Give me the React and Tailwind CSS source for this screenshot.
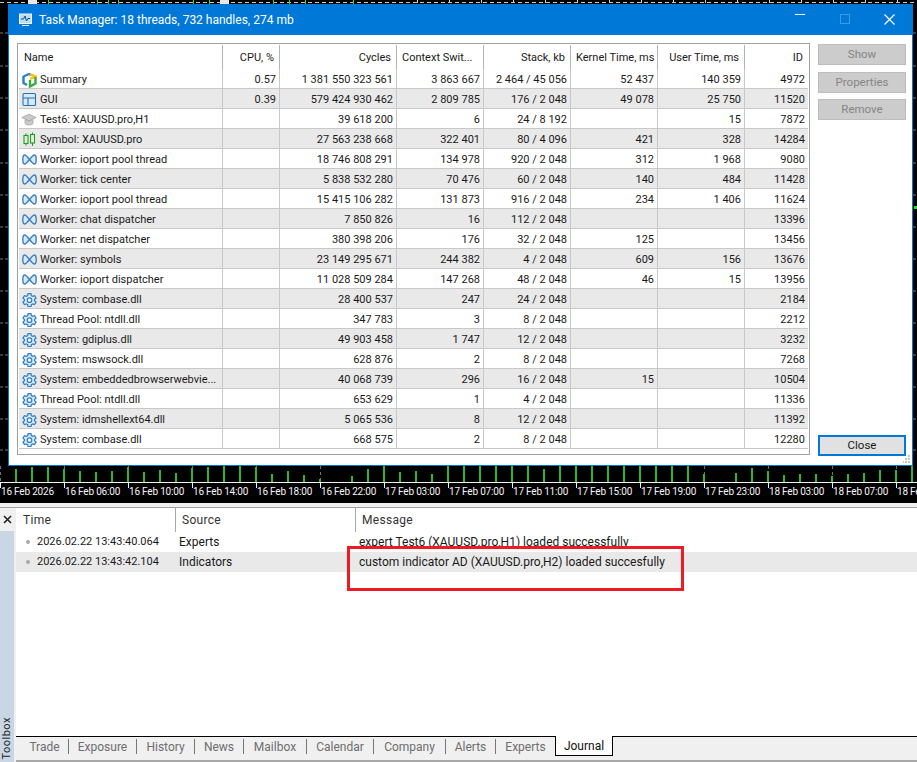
import React from 'react';

const font = { fontFamily: 'Roboto, "Liberation Sans", sans-serif' };

const columns = [
  { label: 'Name', width: 'w-[204px]', align: 'text-left' },
  { label: 'CPU, %', width: 'w-[57px]', align: 'text-right' },
  { label: 'Cycles', width: 'w-[117px]', align: 'text-right' },
  { label: 'Context Swit...', width: 'w-[87px]', align: 'text-left' },
  { label: 'Stack, kb', width: 'w-[87px]', align: 'text-right' },
  { label: 'Kernel Time, ms', width: 'w-[87px]', align: 'text-left' },
  { label: 'User Time, ms', width: 'w-[87px]', align: 'text-right' },
  { label: 'ID', width: 'w-[63px]', align: 'text-right' },
];

const rows = [
  ['summary', 'Summary', '0.57', '1 381 550 323 561', '3 863 667', '2 464 / 45 056', '52 437', '140 359', '4972'],
  ['gui', 'GUI', '0.39', '579 424 930 462', '2 809 785', '176 / 2 048', '49 078', '25 750', '11520'],
  ['cap', 'Test6: XAUUSD.pro,H1', '', '39 618 200', '6', '24 / 8 192', '', '15', '7872'],
  ['candle', 'Symbol: XAUUSD.pro', '', '27 563 238 668', '322 401', '80 / 4 096', '421', '328', '14284'],
  ['worker', 'Worker: ioport pool thread', '', '18 746 808 291', '134 978', '920 / 2 048', '312', '1 968', '9080'],
  ['worker', 'Worker: tick center', '', '5 838 532 280', '70 476', '60 / 2 048', '140', '484', '11428'],
  ['worker', 'Worker: ioport pool thread', '', '15 415 106 282', '131 873', '916 / 2 048', '234', '1 406', '11624'],
  ['worker', 'Worker: chat dispatcher', '', '7 850 826', '16', '112 / 2 048', '', '', '13396'],
  ['worker', 'Worker: net dispatcher', '', '380 398 206', '176', '32 / 2 048', '125', '', '13456'],
  ['worker', 'Worker: symbols', '', '23 149 295 671', '244 382', '4 / 2 048', '609', '156', '13676'],
  ['worker', 'Worker: ioport dispatcher', '', '11 028 509 284', '147 268', '48 / 2 048', '46', '15', '13956'],
  ['gear', 'System: combase.dll', '', '28 400 537', '247', '24 / 2 048', '', '', '2184'],
  ['gear', 'Thread Pool: ntdll.dll', '', '347 783', '3', '8 / 2 048', '', '', '2212'],
  ['gear', 'System: gdiplus.dll', '', '49 903 458', '1 747', '12 / 2 048', '', '', '3232'],
  ['gear', 'System: mswsock.dll', '', '628 876', '2', '8 / 2 048', '', '', '7268'],
  ['gear', 'System: embeddedbrowserwebvie...', '', '40 068 739', '296', '16 / 2 048', '15', '', '10504'],
  ['gear', 'Thread Pool: ntdll.dll', '', '653 629', '1', '4 / 2 048', '', '', '11336'],
  ['gear', 'System: idmshellext64.dll', '', '5 065 536', '8', '12 / 2 048', '', '', '11392'],
  ['gear', 'System: combase.dll', '', '668 575', '2', '8 / 2 048', '', '', '12280'],
];

const axisLabels = [
  '16 Feb 2026', '16 Feb 06:00', '16 Feb 10:00', '16 Feb 14:00', '16 Feb 18:00',
  '16 Feb 22:00', '17 Feb 03:00', '17 Feb 07:00', '17 Feb 11:00', '17 Feb 15:00',
  '17 Feb 19:00', '17 Feb 23:00', '18 Feb 03:00', '18 Feb 07:00', '18 Fe',
];

// x position and top y of the volume bars under the dialog
const bars = [
  [16, 469], [32, 467], [48, 467], [64, 469], [80, 471], [96, 472], [112, 471], [128, 467],
  [144, 472], [160, 470], [176, 473], [192, 468], [208, 467], [224, 466], [240, 466], [256, 467],
  [272, 474], [288, 471], [304, 475], [320, 479], [352, 476], [368, 469], [384, 466], [400, 472],
  [416, 471], [432, 474], [448, 466], [464, 466], [480, 466], [496, 466], [512, 466], [528, 466],
  [544, 469], [560, 466], [576, 466], [592, 466], [608, 466], [624, 466], [640, 466], [656, 466],
  [672, 466], [688, 466], [704, 474], [736, 473], [752, 468], [768, 471], [784, 475], [800, 474],
  [816, 474], [832, 476], [848, 474], [864, 473], [880, 470], [896, 470], [912, 466],
];

const tabs = [
  { label: 'Trade', width: 'w-[48px]' },
  { label: 'Exposure', width: 'w-[68px]' },
  { label: 'History', width: 'w-[58px]' },
  { label: 'News', width: 'w-[49px]' },
  { label: 'Mailbox', width: 'w-[63px]' },
  { label: 'Calendar', width: 'w-[67px]' },
  { label: 'Company', width: 'w-[72px]' },
  { label: 'Alerts', width: 'w-[50px]' },
];

function RowIcon({ type }) {
  if (type === 'summary') {
    return (
      <svg width="15" height="16" viewBox="0 0 15 16" fill="none" strokeWidth="2.4">
        <path d="M1.5 4.5 L7 2 L9 3" stroke="#2f7fd0" />
        <path d="M1.5 4 V11 L5 13" stroke="#2f7fd0" />
        <path d="M8 2.2 L13.5 4.5 L8 7" stroke="#f2c21a" />
        <path d="M13.5 5 V11.5 L8 14.5 V8" stroke="#3bab3b" />
      </svg>
    );
  }
  if (type === 'gui') {
    return (
      <svg width="15" height="15" viewBox="0 0 15 15" fill="#d7e8f7" stroke="#2272b8" strokeWidth="1.1">
        <rect x="1" y="1.5" width="12.5" height="12" rx="1" />
        <path d="M1 6 H13.5 M6 6 V13.5" fill="none" />
      </svg>
    );
  }
  if (type === 'cap') {
    return (
      <svg width="16" height="15" viewBox="0 0 16 15" fill="#c9c9c9" stroke="#a6a6a6" strokeWidth="0.8">
        <path d="M0.8 5.5 L8 2.2 L15.2 5.5 L8 8.8 Z" />
        <path d="M4 7.5 V11.5 C6 13.5 10 13.5 12 11.5 V7.5 L8 9.3 Z" />
      </svg>
    );
  }
  if (type === 'candle') {
    return (
      <svg width="15" height="15" viewBox="0 0 15 15" fill="none" stroke="#1ea01e" strokeWidth="1.1">
        <path d="M4 1.5 V3.5 M4 11.5 V13.5 M10.5 0.5 V2.5 M10.5 11 V14" />
        <rect x="2" y="3.5" width="4" height="8" />
        <rect x="8.5" y="2.5" width="4" height="8.5" />
      </svg>
    );
  }
  if (type === 'worker') {
    return (
      <svg width="15" height="15" viewBox="0 0 15 15" fill="#d9e9f7" stroke="#3a7fc4" strokeWidth="1.4">
        <path d="M7.5 7.5 C5 4.3 3.6 3 2.6 3 C1.2 3 0.8 5 0.8 7.5 C0.8 10 1.2 12 2.6 12 C3.6 12 5 10.7 7.5 7.5 C10 4.3 11.4 3 12.4 3 C13.8 3 14.2 5 14.2 7.5 C14.2 10 13.8 12 12.4 12 C11.4 12 10 10.7 7.5 7.5 Z" />
      </svg>
    );
  }
  return (
    <svg width="15" height="15" viewBox="0 0 24 24" fill="#d9e9f7" stroke="#2f7fc1" strokeWidth="2">
      <path d="M9.67 2.5 h4.66 l.6 3.1 2.2 1.27 3-1.03 2.33 4.04 -2.38 2.07 v2.1 l2.38 2.07 -2.33 4.04 -3-1.03 -2.2 1.27 -.6 3.1 H9.67 l-.6-3.1 -2.2-1.27 -3 1.03 L1.54 16.12 3.92 14.05 v-2.1 L1.54 9.88 3.87 5.84 l3 1.03 2.2-1.27 Z" />
      <circle cx="12" cy="13" r="3.6" fill="#fff" />
    </svg>
  );
}

function ChartLayer() {
  const dashRows = [33, 66, 98, 130, 163, 195, 227, 259, 291, 323, 355, 387, 419, 450];
  const topGreen = [48, 97, 108, 118, 193, 209, 273, 289, 305, 353];
  const axisTicks = axisLabels.map((_, i) => i * 64);
  const topTicks = Array.from({ length: 16 }, (_, i) => 417 + i * 32);
  return (
    <svg className="absolute inset-0" width="917" height="503">
      <path d="M0 2.5 H917" stroke="#c8c8c8" strokeDasharray="4 3" />
      {topGreen.map((x) => (
        <rect key={x} x={x} y="0" width="1" height="4" fill="#22e022" />
      ))}
      {topTicks.map((x) => (
        <rect key={x} x={x} y="0" width="1" height="3" fill="#d0d0d0" />
      ))}
      <rect x="28" y="0" width="9" height="4" fill="#e8e8e8" />
      <rect x="220" y="0" width="9" height="4" fill="#e8e8e8" />
      {dashRows.map((y) => (
        <g key={y}>
          <path d={`M0 ${y} H8`} stroke="#777" strokeDasharray="3 2" />
          <path d={`M913 ${y} H917`} stroke="#777" strokeDasharray="3 2" />
        </g>
      ))}
      <rect x="914" y="206" width="3" height="3" fill="#22e022" />
      {axisTicks.map((x) => (
        <path key={x} d={`M${x + 0.5} 466 V481`} stroke="#6b7280" strokeDasharray="3 3" />
      ))}
      {bars.map(([x, y]) => (
        <rect key={x} x={x - 1} y={y} width="2" height={482 - y} fill="#2fb52f" />
      ))}
      <rect x="0" y="482" width="917" height="1" fill="#f2f2f2" />
      {axisTicks.map((x) => (
        <rect key={x} x={x} y="482" width="1" height="6" fill="#f2f2f2" />
      ))}
    </svg>
  );
}

function SideButton({ children, className = '' }) {
  return (
    <div className={`h-[21px] w-[88px] pt-px bg-[#cccccc] border border-[#bdbdbd] flex items-center justify-center text-[#858585] text-[11.5px] ${className}`}>
      {children}
    </div>
  );
}

function TaskDialog() {
  return (
    <div className="relative w-[905px] h-[462px] bg-white border border-[#0078d7] border-t-0 flex flex-col">
      <div className="h-[31px] bg-[#0078d7] flex items-center text-white shrink-0 -mx-px">
        <svg className="ml-[11px] mr-[7px]" width="13" height="13" viewBox="0 0 13 13" fill="none">
          <rect x="0.5" y="1" width="12" height="9.5" fill="#bcdcf5" stroke="#e8f4ff" />
          <path d="M2 6 H4.5 L6 3 L7.5 8 L8.8 5.5 H11" stroke="#0b4f8a" />
          <path d="M3 12.5 H10" stroke="#e8f4ff" />
        </svg>
        <span className="text-[12px]">Task Manager: 18 threads, 732 handles, 274 mb</span>
        <div className="ml-auto mr-px flex">
          <div className="w-[45px] flex justify-center">
            <div className="w-[10px] h-px bg-white" />
          </div>
          <div className="w-[45px] flex justify-center">
            <div className="w-[10px] h-[10px] border border-[#3d9be3]" />
          </div>
          <div className="w-[45px] flex justify-center">
            <svg width="11" height="11" viewBox="0 0 11 11" stroke="#fff" strokeWidth="1.2">
              <path d="M0.5 0.5 L10.5 10.5 M10.5 0.5 L0.5 10.5" />
            </svg>
          </div>
        </div>
      </div>

      <div className="flex flex-1 pt-2 pl-2 pb-[9px] pr-[6px]">
        <div className="w-[793px] h-[412px] border border-[#a0a0a0] p-px text-[#1a1a1a] text-[11px] overflow-hidden">
          <div className="flex h-[24px]">
            {columns.map((col) => (
              <div
                key={col.label}
                className={`${col.width} ${col.align} shrink-0 h-[24px] px-[5px] leading-[26px] whitespace-nowrap border-r border-[#b4b4b4] last:border-r-0`}
              >
                {col.label}
              </div>
            ))}
          </div>
          {rows.map((row, i) => (
            <div key={i} className={`flex h-[20px] leading-[21px] border-b border-[#c8c8c8] ${i % 2 === 1 ? 'bg-[#e9e9e9]' : 'bg-white'}`}>
              <div className="w-[204px] shrink-0 flex items-center pl-[2px] pt-[2px] gap-[3px] border-r border-[#c8c8c8] whitespace-nowrap overflow-hidden">
                <span className="w-[16px] flex justify-center shrink-0">
                  <RowIcon type={row[0]} />
                </span>
                {row[1]}
              </div>
              <div className="w-[57px] shrink-0 text-right pr-[3px] border-r border-[#c8c8c8]">{row[2]}</div>
              <div className="w-[117px] shrink-0 text-right pr-[3px] border-r border-[#c8c8c8] whitespace-nowrap">{row[3]}</div>
              <div className="w-[87px] shrink-0 text-right pr-[3px] border-r border-[#c8c8c8]">{row[4]}</div>
              <div className="w-[87px] shrink-0 text-right pr-[3px] border-r border-[#c8c8c8] whitespace-nowrap">{row[5]}</div>
              <div className="w-[87px] shrink-0 text-right pr-[3px] border-r border-[#c8c8c8]">{row[6]}</div>
              <div className="w-[87px] shrink-0 text-right pr-[3px] border-r border-[#c8c8c8]">{row[7]}</div>
              <div className="w-[63px] shrink-0 text-right pr-[3px]">{row[8]}</div>
            </div>
          ))}
        </div>

        <div className="ml-2 flex flex-col">
          <div className="flex flex-col mt-px">
            <SideButton>Show</SideButton>
            <SideButton className="mt-[7px]">Properties</SideButton>
            <SideButton className="mt-[6px]">Remove</SideButton>
          </div>
          <div className="mt-auto h-[21px] w-[88px] pt-px bg-[#e1e1e1] border-2 border-[#0078d7] flex items-center justify-center text-[#1a1a1a] text-[11.5px]">
            Close
          </div>
        </div>
      </div>

      <svg className="absolute right-[1px] bottom-[2px]" width="8" height="8" fill="#c4c4c4">
        <rect x="5" y="0" width="2" height="2" />
        <rect x="2" y="3" width="2" height="2" />
        <rect x="5" y="3" width="2" height="2" />
        <rect x="-1" y="6" width="2" height="2" />
        <rect x="2" y="6" width="2" height="2" />
        <rect x="5" y="6" width="2" height="2" />
      </svg>
    </div>
  );
}

function LogRow({ time, source, text, shaded }) {
  return (
    <div className={`flex h-[20px] items-center text-[#1a1a1a] ${shaded ? 'bg-[#e9e9e9]' : ''}`}>
      <div className="w-[21px] shrink-0 flex justify-center pl-[3px]">
        <div className="w-[4px] h-[4px] rounded-full bg-[#a8a8a8]" />
      </div>
      <div className="w-[142px] shrink-0 whitespace-nowrap text-[11px]">{time}</div>
      <div className="w-[180px] shrink-0">{source}</div>
      <div className="whitespace-nowrap">{text}</div>
    </div>
  );
}

function Toolbox() {
  return (
    <div className="flex-1 flex border-t border-[#a0a0a0] min-h-0">
      <div className="w-[16px] shrink-0 bg-[#f0f0f0] flex flex-col">
        <div className="h-[23px] w-[14px] flex items-center justify-center">
          <svg width="9" height="9" viewBox="0 0 9 9" stroke="#222" strokeWidth="1.6">
            <path d="M1 1 L8 8 M8 1 L1 8" />
          </svg>
        </div>
        <div className="flex-1 w-[14px] bg-[#c9d7e5] flex items-end justify-center pb-[2px]">
          <span className="[writing-mode:vertical-rl] rotate-180 text-[11px] tracking-[0.5px] text-[#222]">Toolbox</span>
        </div>
      </div>

      <div className="flex-1 min-w-0 flex flex-col bg-white">
        <div className="flex h-[24px] items-stretch text-[#333] tracking-[0.3px]">
          <div className="w-[160px] pl-[7px] pt-[3px] border-r border-[#a8a8a8]">Time</div>
          <div className="w-[180px] pl-[6px] pt-[3px] border-r border-[#a8a8a8]">Source</div>
          <div className="pl-[6px] pt-[3px]">Message</div>
        </div>
        <LogRow time="2026.02.22 13:43:40.064" source="Experts" text="expert Test6 (XAUUSD.pro,H1) loaded successfully" />
        <LogRow shaded time="2026.02.22 13:43:42.104" source="Indicators" text="custom indicator AD (XAUUSD.pro,H2) loaded succesfully" />
        <div className="flex-1" />
        <div className="h-[26px] bg-[#f0f0f0] border-t border-black border-b-2 border-b-[#a8a8a8] flex pl-[5px] shrink-0">
          {tabs.map((tab) => (
            <div key={tab.label} className={`${tab.width} mt-[2px] h-[15px] flex items-center justify-center border-r border-[#777] text-[#6e6e6e]`}>
              {tab.label}
            </div>
          ))}
          <div className="w-[59px] mt-[2px] h-[15px] flex items-center justify-center text-[#6e6e6e]">Experts</div>
          <div className="w-[58px] h-[20px] -mt-px bg-white border-r border-b border-l border-black flex items-center justify-center text-[#111]">
            Journal
          </div>
        </div>
      </div>
    </div>
  );
}

export default function App() {
  return (
    <div className="relative w-[917px] h-[762px] overflow-hidden flex flex-col bg-[#f0f0f0] text-[12px]" style={font}>
      <div className="relative h-[503px] bg-black shrink-0">
        <ChartLayer />
        <div className="relative pt-1 pl-2">
          <TaskDialog />
        </div>
        <div className="relative flex mt-[18px] h-[16px] text-[#f5f5f5] text-[10px] tracking-[-0.2px] leading-[16px] whitespace-nowrap">
          {axisLabels.map((label, i) => (
            <div key={i} className="w-[64px] shrink-0 pl-px">{label}</div>
          ))}
        </div>
      </div>
      <div className="h-[4px] shrink-0 bg-[#f0f0f0]" />
      <Toolbox />
      <div className="absolute left-[347px] top-[546px] w-[337px] h-[45px] border-[3px] border-[#ed1c24]" />
    </div>
  );
}
